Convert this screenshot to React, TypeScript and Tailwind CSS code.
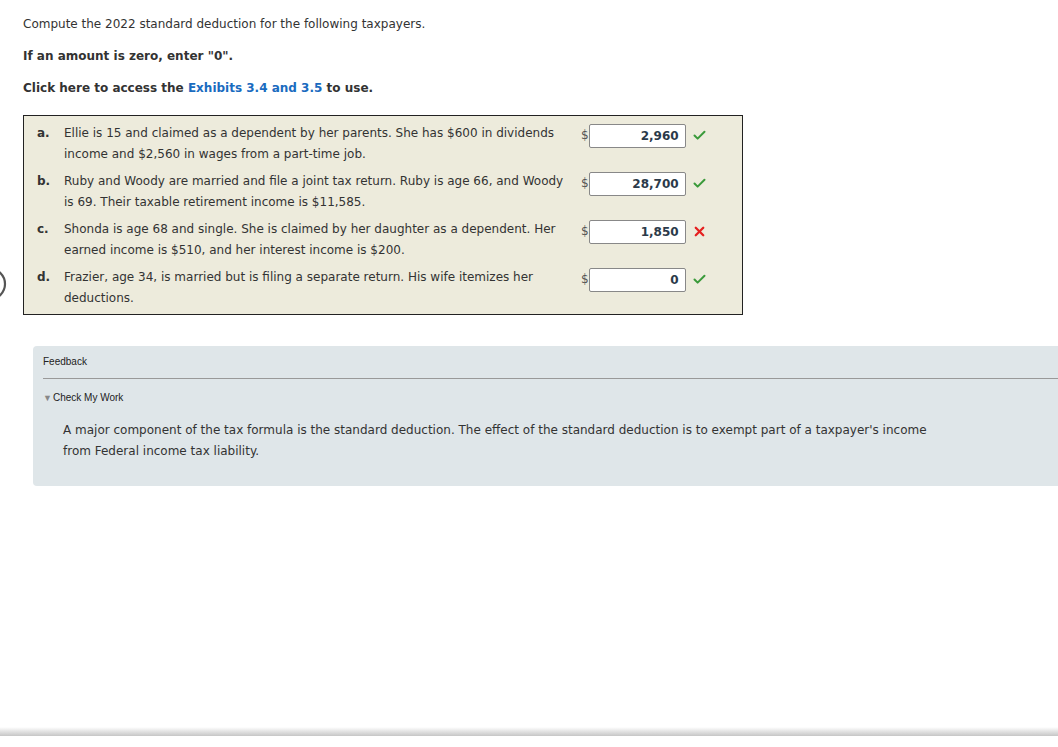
import { Check, X } from 'lucide-react';

const rows = [
  {
    key: 'a.',
    text: 'Ellie is 15 and claimed as a dependent by her parents. She has $600 in dividends income and $2,560 in wages from a part-time job.',
    value: '2,960',
    ok: true,
  },
  {
    key: 'b.',
    text: 'Ruby and Woody are married and file a joint tax return. Ruby is age 66, and Woody is 69. Their taxable retirement income is $11,585.',
    value: '28,700',
    ok: true,
  },
  {
    key: 'c.',
    text: 'Shonda is age 68 and single. She is claimed by her daughter as a dependent. Her earned income is $510, and her interest income is $200.',
    value: '1,850',
    ok: false,
  },
  {
    key: 'd.',
    text: 'Frazier, age 34, is married but is filing a separate return. His wife itemizes her deductions.',
    value: '0',
    ok: true,
  },
];

export default function App() {
  return (
    <div className="relative w-[1058px] h-[747px] bg-white overflow-hidden font-['DejaVu_Sans',Verdana,sans-serif] text-[12px] text-[#333]">
      {/* partially hidden round button on the left edge */}
      <svg className="absolute left-0 top-[266px]" width="12" height="36" viewBox="0 0 12 36">
        <circle cx="-10" cy="18" r="15" fill="none" stroke="#555" strokeWidth="2.2" />
      </svg>

      <div className="pl-[23px] pt-[15px]">
        <p className="leading-[18px]">Compute the 2022 standard deduction for the following taxpayers.</p>
        <p className="mt-[14px] leading-[18px] font-bold">If an amount is zero, enter "0".</p>
        <p className="mt-[14px] leading-[18px] font-bold">
          Click here to access the <span className="text-[#1a6bbf]">Exhibits 3.4 and 3.5</span> to use.
        </p>

        {/* question table */}
        <div className="mt-[18px] w-[720px] border border-[#222] bg-[#edebdc] pt-[7px]">
          {rows.map((r, i) => (
            <div key={r.key} className={`flex items-start ${i === rows.length - 1 ? 'h-[47px]' : 'h-[48px]'}`}>
              <div className="w-[40px] pl-[13px] font-bold leading-[21px]">{r.key}</div>
              <div className="w-[512px] pr-[6px] leading-[21px]">{r.text}</div>
              <div className="flex items-start pt-[1px] ml-[5px]">
                <span className="text-[12px] leading-[22px] text-[#555]">$</span>
                <div className="w-[97px] h-[24px] bg-white border border-[#888] rounded-[2px] text-right pr-[6px] font-bold leading-[22px] text-[#2b3a4a]">
                  {r.value}
                </div>
                <div className="ml-[6px] mt-[4px]">
                  {r.ok ? (
                    <Check size={15} strokeWidth={3.2} className="text-[#3a9a3a]" />
                  ) : (
                    <X size={15} strokeWidth={3.6} className="text-[#e52020]" />
                  )}
                </div>
              </div>
            </div>
          ))}
        </div>
      </div>

      {/* feedback panel */}
      <div className="ml-[33px] mt-[31px] bg-[#dfe6e9] rounded-tl-[4px] rounded-bl-[4px] pl-[10px] pt-[10px] h-[140px]">
        <div className="font-['Liberation_Sans',Arial,sans-serif] text-[10px] leading-[12px] text-[#222]">Feedback</div>
        <div className="mt-[10px] border-t border-[#999]" />
        <div className="mt-[13px] flex items-center gap-[1px] font-['Liberation_Sans',Arial,sans-serif] text-[10px] leading-[12px] text-[#222]">
          <span className="text-[9px] text-[#888]">▼</span>
          <span>Check My Work</span>
        </div>
        <p className="mt-[16px] pl-[20px] leading-[21px] text-[#333]">
          A major component of the tax formula is the standard deduction. The effect of the standard deduction is to exempt part of a taxpayer's income
          <br />
          from Federal income tax liability.
        </p>
      </div>

      {/* bottom shadow */}
      <div className="absolute left-0 right-0 top-[727px] h-[9px] bg-gradient-to-b from-white to-[#c6c6c6]" />
    </div>
  );
}
